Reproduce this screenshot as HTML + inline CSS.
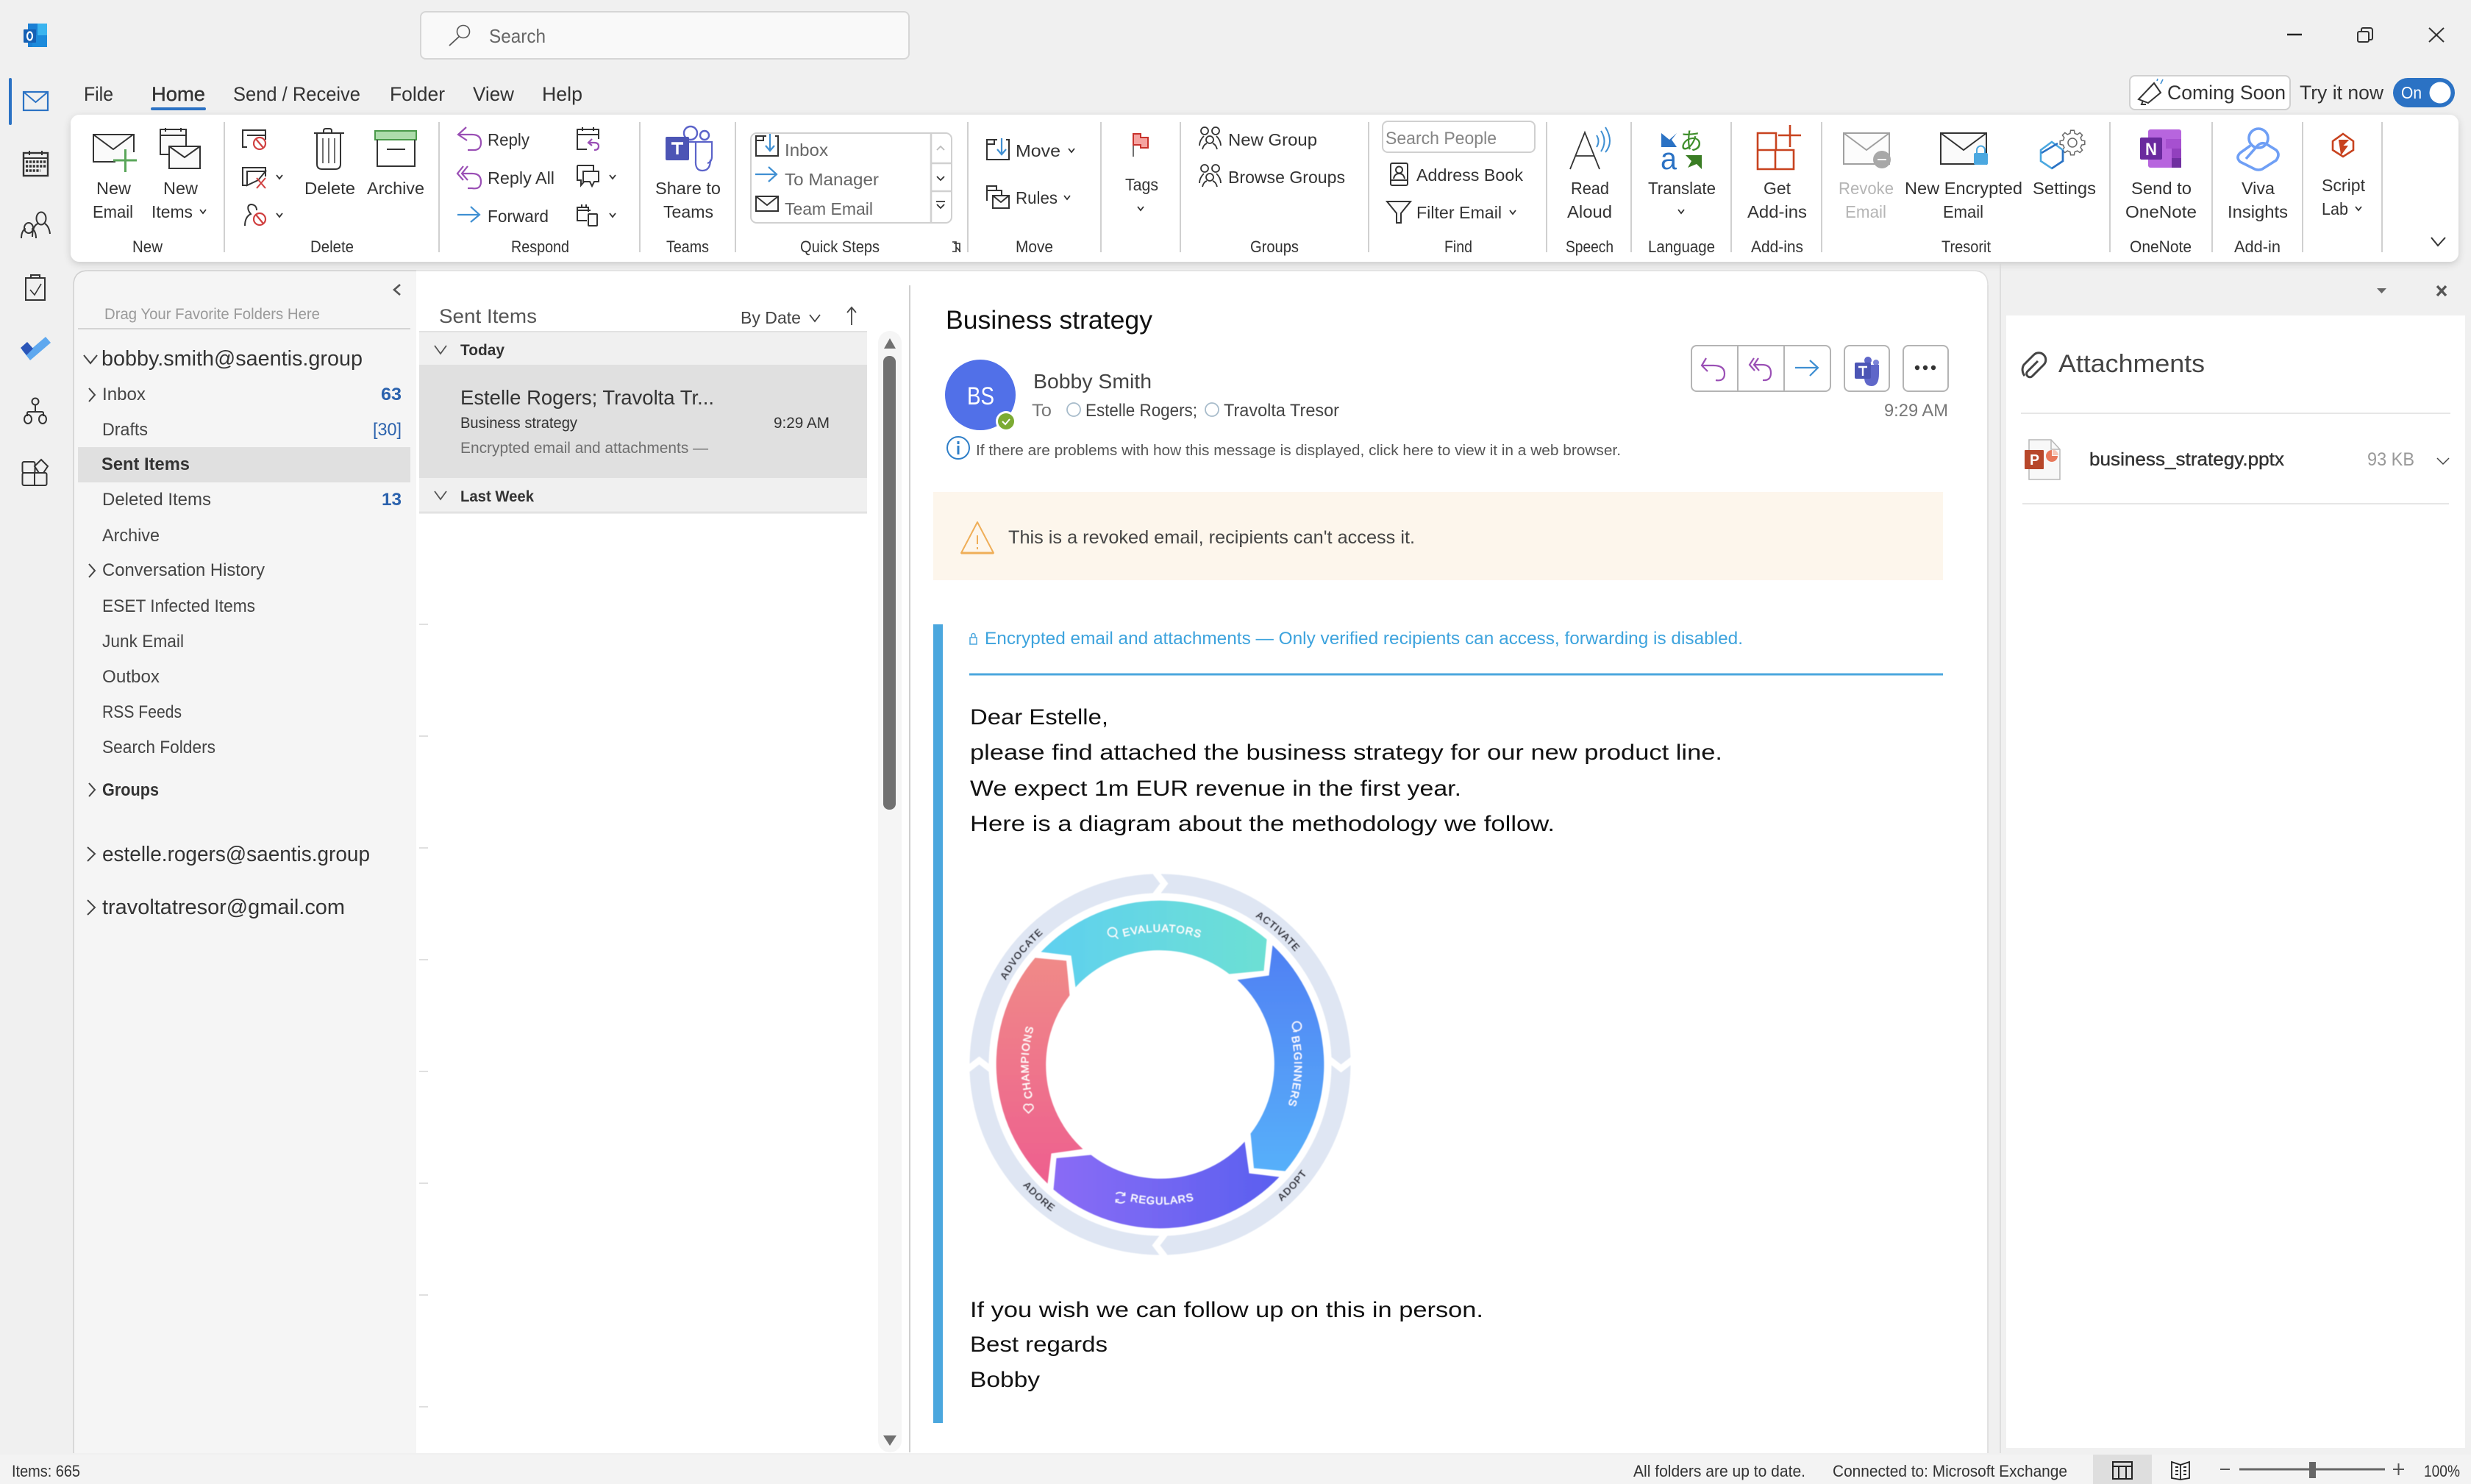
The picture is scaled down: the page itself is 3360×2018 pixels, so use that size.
<!DOCTYPE html>
<html lang="en"><head><meta charset="utf-8"><title>Outlook - Business strategy</title>
<style>
html,body{margin:0;padding:0;background:#f0f0f0}
svg{display:block;font-family:"Liberation Sans","Noto Sans CJK JP",sans-serif}
text{fill:#333}
.s20{font-size:20px}.s21{font-size:21px}.s22{font-size:22px}.s23{font-size:23px}.s24{font-size:24px}.s25{font-size:25px}.s26{font-size:26px}.s27{font-size:27px}.s28{font-size:28px}.s29{font-size:29px}.s30{font-size:30px}.s34{font-size:34px}.s35{font-size:35px}
.b{font-weight:bold}.g{fill:#777}.lg{fill:#999}.bl{fill:#2b62ad}.k{fill:#111}.sm{stroke:#333;stroke-width:.4px}
.i{fill:none;stroke:#333;stroke-width:2}.ip{fill:#fafafa;stroke:#333;stroke-width:2}
.pu{fill:none;stroke:#9a4fb5;stroke-width:2.2}.fw{fill:none;stroke:#3f8fd2;stroke-width:2.2}
.ch{fill:none;stroke:#333;stroke-width:1.8}
.sep{stroke:#d0d0d0;stroke-width:2}
.w{fill:#fff;font-size:14.5px;letter-spacing:1.1px;stroke:#fff;stroke-width:.35px}.o{fill:#1c1c2a;font-size:14px;letter-spacing:.7px;font-weight:bold}
</style></head><body>
<svg width="3360" height="2018" viewBox="0 0 3360 2018" xmlns="http://www.w3.org/2000/svg">
<defs>
<filter id="sh" x="-2%" y="-10%" width="104%" height="125%"><feDropShadow dx="0" dy="3" stdDeviation="5" flood-color="#000" flood-opacity=".16"/></filter>
<filter id="soft" x="-5%" y="-5%" width="110%" height="110%"><feGaussianBlur stdDeviation=".5"/></filter>
<linearGradient id="gT" gradientUnits="userSpaceOnUse" x1="-162" y1="0" x2="145" y2="0"><stop offset="0" stop-color="#5fd0ef"/><stop offset="1" stop-color="#6de0d4"/></linearGradient>
<linearGradient id="gB" gradientUnits="userSpaceOnUse" x1="-162" y1="0" x2="145" y2="0"><stop offset="0" stop-color="#5080f3"/><stop offset="1" stop-color="#57b0fa"/></linearGradient>
<linearGradient id="gP" gradientUnits="userSpaceOnUse" x1="-162" y1="0" x2="145" y2="0"><stop offset="0" stop-color="#5a60f0"/><stop offset="1" stop-color="#8a6cf5"/></linearGradient>
<linearGradient id="gR" gradientUnits="userSpaceOnUse" x1="-162" y1="0" x2="145" y2="0"><stop offset="0" stop-color="#ee5f8f"/><stop offset="1" stop-color="#f08a88"/></linearGradient>
<path id="aEv" d="M-130,-125A180 180 0 0 1 130,-125"/>
<path id="aRe" d="M-135,134A190 190 0 0 0 135,134"/>
<path id="aBe" d="M140,-117.500A183 183 0 0 1 127,131.500"/>
<path id="aCh" d="M-133,119.800A179 179 0 0 1 -129,-124.300"/>
<path id="aAc" d="M41.500,-235.400A239 239 0 0 1 228.600,-69.900"/>
<path id="aAv" d="M-237.200,-29.100A239 239 0 0 1 -81.700,-224.600"/>
<path id="aAd" d="M64.400,240.500A249 249 0 0 0 245.200,43.200"/>
<path id="aAo" d="M-240.500,64.400A249 249 0 0 0 -43.200,245.200"/>
</defs>
<rect width="3360" height="2018" fill="#f0f0f0"/>

<!-- title bar -->
<path fill="#1a7fd4" d="M38,32h26v32H38z"/><path fill="#3ab4ef" d="M51,32h13v16H51z"/><path fill="#1c8adb" d="M44,48h20v16H44z"/><rect x="32" y="40" width="17" height="18" rx="1" fill="#1560b4"/><ellipse cx="40.500" cy="49" rx="3.500" ry="5.500" fill="none" stroke="#fff" stroke-width="2.200"/>
<rect x="572" y="16" width="664" height="64" rx="7" fill="#f9f9f9" stroke="#d6d6d6" stroke-width="2"/>
<circle cx="630" cy="43" r="8.500" fill="none" stroke="#555" stroke-width="1.600"/><path d="M624,50L611,62" style="stroke:#555;stroke-width:1.800;fill:none"/>
<text x="665" y="58" textLength="77" lengthAdjust="spacingAndGlyphs" class="s26" style="fill:#666">Search</text>
<path d="M3110,47h20" stroke="#222" stroke-width="2.400" fill="none"/>
<rect x="3206" y="43" width="15" height="14" rx="2" class="i"/><path d="M3211,43v-3a2,2 0 0 1 2-2h10a3,3 0 0 1 3,3v11a2,2 0 0 1-2,2h-3" class="i"/>
<path d="M3303,38L3323,57M3323,38L3303,57" class="i"/>

<!-- nav rail -->
<rect x="12" y="106" width="4" height="64" rx="2" fill="#2b72c4"/>
<rect x="32" y="125" width="33" height="25" fill="none" stroke="#2b72c4" stroke-width="2.200"/><path d="M32,125L48.500,139L65,125" fill="none" stroke="#2b72c4" stroke-width="2"/>
<rect x="32" y="208" width="33" height="31" class="i" style="stroke-width:2.400"/><path d="M32,215h33M40,205v6M57,205v6" class="i"/><path d="M35,220h28M35,226h28M35,232h20" fill="none" stroke="#333" stroke-width="3.400" stroke-dasharray="3.200 1.600"/>
<ellipse cx="56" cy="297" rx="6.500" ry="8.500" class="i"/><path d="M44,322c0-12,4-17,8-18M68,318c-1-8-4-12-7-14" class="i"/><ellipse cx="39" cy="310" rx="6" ry="7" class="i"/><path d="M29,324c0-8,3-12,6-13M49,324c0-8-3-12-6-13" class="i"/>
<path d="M35,378h26v30H35z" class="i"/><path d="M42,378v-4h12v4" class="i"/><path d="M41,394l6,7l9-15" class="i" style="stroke-width:1.600"/>
<polygon points="30,476 41,490 69,466 62,458 41,476 37,472" fill="#5ea8ef"/><polygon points="28,473 37,465 45,474 36,483" fill="#2a55b8"/>
<circle cx="48" cy="546" r="4.500" class="i"/><path d="M48,551v9M37,566v-4q0-2 2-2h18q2,0 2,2v4" class="i"/><ellipse cx="38" cy="570" rx="5" ry="6" class="i"/><ellipse cx="58" cy="570" rx="5" ry="6" class="i"/>
<rect x="30.500" y="628" width="17" height="15" rx="2" class="i"/><path d="M56,625l9,9l-6,9h-6l-6-9z" class="i"/><rect x="30.500" y="643" width="33" height="17" rx="2" class="i"/><path d="M47,643v17" class="i"/>

<!-- tabs -->
<text x="114" y="137" textLength="40" lengthAdjust="spacingAndGlyphs" class="s27">File</text>
<text x="206" y="137" textLength="73" lengthAdjust="spacingAndGlyphs" class="s27 sm">Home</text>
<rect x="205" y="146" width="75" height="4" rx="2" fill="#2b72c4"/>
<text x="317" y="137" textLength="173" lengthAdjust="spacingAndGlyphs" class="s27">Send / Receive</text>
<text x="530" y="137" textLength="75" lengthAdjust="spacingAndGlyphs" class="s27">Folder</text>
<text x="643" y="137" textLength="56" lengthAdjust="spacingAndGlyphs" class="s27">View</text>
<text x="737" y="137" textLength="55" lengthAdjust="spacingAndGlyphs" class="s27">Help</text>
<rect x="2896" y="103" width="218" height="46" rx="7" fill="#fff" stroke="#d0d0d0" stroke-width="2"/>
<path d="M2929,113L2938,126L2921,140L2908,135z" class="i"/><path d="M2914,137l-2,5l6,0" class="i"/><path d="M2933,110l1-3M2938,114l3-6" fill="none" stroke="#3f8fd2" stroke-width="1.600"/>
<text x="2947" y="135" textLength="161" lengthAdjust="spacingAndGlyphs" class="s27">Coming Soon</text>
<text x="3127" y="135" textLength="114" lengthAdjust="spacingAndGlyphs" class="s27">Try it now</text>
<rect x="3254" y="106" width="84" height="40" rx="20" fill="#2b72c4"/><text x="3265" y="134" textLength="28" lengthAdjust="spacingAndGlyphs" class="s23" style="fill:#fff">On</text><circle cx="3318" cy="126" r="14.500" fill="#fff"/>

<!-- ribbon -->
<rect x="96" y="156" width="3247" height="200" rx="12" fill="#fff" filter="url(#sh)"/>
<path class="sep" d="M305,166v177M597,166v177M870,166v177M1000,166v177M1316,166v177M1497,166v177M1605,166v177M1861,166v177M2103,166v177M2218,166v177M2354,166v177M2477,166v177M2869,166v177M3008,166v177M3131,166v177M3239,166v177"/>

<!-- new -->
<path d="M182,207V183H127V220h30" class="ip"/><path d="M127,183L154,203L181,183" class="i"/><path d="M170.500,203v31M154,218h32" fill="none" stroke="#5aa65a" stroke-width="3"/>
<path d="M230,210H218V176h35v22" class="ip"/><path d="M218,184h35M225,174v5M246,174v5" class="i"/><rect x="230" y="199" width="42" height="30" class="ip"/><path d="M230,199L251,214L272,199" class="i"/>
<text x="131" y="264" textLength="47" lengthAdjust="spacingAndGlyphs" class="s23">New</text><text x="126" y="296" textLength="55" lengthAdjust="spacingAndGlyphs" class="s23">Email</text>
<text x="222" y="264" textLength="47" lengthAdjust="spacingAndGlyphs" class="s23">New</text><text x="206" y="296" textLength="56" lengthAdjust="spacingAndGlyphs" class="s23">Items</text><path class="ch" d="M272,285l4,5l4-5"/>
<text x="180" y="343" textLength="41" lengthAdjust="spacingAndGlyphs" class="s22">New</text>

<!-- delete -->
<path d="M336,200H330V177h31v13" class="i"/><path d="M336,184h25" class="i"/><circle cx="353" cy="195" r="8" fill="#fff" stroke="#d04040" stroke-width="2.200"/><path d="M348,189l10,12" stroke="#d04040" stroke-width="2.200"/>
<path d="M336,252h-6v-24h31v12" class="i"/><path d="M336,252V233h25l-10,12z" class="i"/><path d="M349,242l12,14M361,242l-12,14" stroke="#d04040" stroke-width="2" fill="none"/>
<path d="M333,307c0-10,4-14,8-16c-5-6-5-12,0-13c5,0,8,3,8,8" class="i"/><circle cx="353" cy="298" r="8" fill="#fff" stroke="#d04040" stroke-width="2.200"/><path d="M348,292l10,12" stroke="#d04040" stroke-width="2.200"/>
<path class="ch" d="M376,238l4,5l4-5M376,290l4,5l4-5"/>
<path d="M427,181h41M440,181v-3q0-3 3-3h5q3,0 3,3v3" class="i"/><path d="M431,181v42q0,7 7,7h18q7,0 7-7V181" class="i"/><path d="M439,188v34M447,188v34M455,188v34" class="i" style="stroke-width:1.400"/>
<rect x="510" y="178" width="56" height="12" fill="#addcab" stroke="#4a9a4a" stroke-width="2"/><path d="M513,190v36h51V190" class="i"/><path d="M526,203h25" class="i"/>
<text x="414" y="264" textLength="69" lengthAdjust="spacingAndGlyphs" class="s23">Delete</text><text x="499" y="264" textLength="78" lengthAdjust="spacingAndGlyphs" class="s23">Archive</text>
<text x="422" y="343" textLength="59" lengthAdjust="spacingAndGlyphs" class="s22">Delete</text>

<!-- respond -->
<path class="pu" d="M634,173L623,183L635,191M623,183H642Q654,183 654,194T642,204H636"/>
<path class="pu" d="M630,226L622,236L630,245M636,226L628,236L636,245M628,236H642Q654,236 654,247T642,256H636"/>
<path class="fw" d="M622,292H652M640,281L652,292L640,302"/>
<text x="663" y="198" textLength="57" lengthAdjust="spacingAndGlyphs" class="s23">Reply</text><text x="663" y="250" textLength="91" lengthAdjust="spacingAndGlyphs" class="s23">Reply All</text><text x="663" y="302" textLength="83" lengthAdjust="spacingAndGlyphs" class="s23">Forward</text>
<path d="M798,203H785V176h29v13M785,183h29M792,173v5M807,173v5" class="i"/><path class="pu" d="M805,189l-5,5l5,4M800,194h8q6,0 6,5t-6,5"/>
<path d="M785,225h22v10M785,225v20l5,0 v7l6-7" class="i"/><path d="M793,233h21v14h-6l-3,6l-3-6h-9z" class="ip"/>
<path d="M800,288V282h-15v18h13M785,286h18M791,278v4M797,278v4" class="i"/><rect x="800" y="291" width="12" height="16" class="ip" rx="1"/>
<path class="ch" d="M829,238l4,5l4-5M829,290l4,5l4-5"/>
<text x="695" y="343" textLength="79" lengthAdjust="spacingAndGlyphs" class="s22">Respond</text>

<!-- teams -->
<circle cx="939" cy="181" r="9" fill="none" stroke="#5b63c9" stroke-width="2.400"/><circle cx="958" cy="184" r="6" fill="none" stroke="#5b63c9" stroke-width="2.400"/>
<path d="M937,193h31v20q0,7-6,9M946,193v25q-1,14 9,14q11,0 11-15" fill="none" stroke="#5b63c9" stroke-width="2.200"/>
<rect x="905" y="186" width="32" height="32" rx="2" fill="#4c55b5"/><path d="M913,195h16M921,195v15" stroke="#fff" stroke-width="3.400"/>
<text x="891" y="264" textLength="89" lengthAdjust="spacingAndGlyphs" class="s23">Share to</text><text x="902" y="296" textLength="68" lengthAdjust="spacingAndGlyphs" class="s23">Teams</text>
<text x="906" y="343" textLength="58" lengthAdjust="spacingAndGlyphs" class="s22">Teams</text>

<!-- quick steps -->
<rect x="1021" y="181" width="273" height="122" rx="8" fill="#fff" stroke="#d0d0d0" stroke-width="2"/>
<path class="sep" d="M1266,181v122M1266,222h28M1266,260h28" style="stroke-width:2.600"/>
<path class="ch" d="M1274,204l5-5l5,5" style="stroke:#bbb"/><path class="ch" d="M1274,240l5,5l5-5"/><path class="ch" d="M1274,278l5,5l5-5M1273,274h12"/>
<path d="M1042,185h-14v27h30v-27h-4M1028,191h10v-6" class="i"/><path d="M1047,182v22M1041,198l6,7l6-7" class="fw"/>
<path class="fw" d="M1027,237h29M1045,227l11,10l-11,10"/>
<rect x="1028" y="267" width="30" height="20" class="ip"/><path d="M1028,267l15,12l15-12" class="i"/>
<text x="1067" y="212" textLength="59" lengthAdjust="spacingAndGlyphs" class="s23" style="fill:#666">Inbox</text><text x="1067" y="252" textLength="128" lengthAdjust="spacingAndGlyphs" class="s23" style="fill:#666">To Manager</text><text x="1067" y="292" textLength="120" lengthAdjust="spacingAndGlyphs" class="s23" style="fill:#666">Team Email</text>
<text x="1088" y="343" textLength="108" lengthAdjust="spacingAndGlyphs" class="s22">Quick Steps</text>
<path d="M1295,329h5v13h-5M1297,331h8v12M1300,336l6,6" fill="none" stroke="#333" stroke-width="1.600"/>

<!-- move -->
<path d="M1356,190h-14v27h30v-27h-4M1342,196h10v-6" class="i"/><path d="M1362,188v21M1356,203l6,7l6-7" class="fw"/>
<path d="M1355,259v-6h-13v20M1342,259h20v10" class="i"/><rect x="1350" y="266" width="22" height="17" class="ip"/><path d="M1350,266l11,9l11-9" class="i"/>
<text x="1381" y="213" textLength="61" lengthAdjust="spacingAndGlyphs" class="s23">Move</text><text x="1381" y="277" textLength="57" lengthAdjust="spacingAndGlyphs" class="s23">Rules</text>
<path class="ch" d="M1453,202l4,5l4-5M1447,266l4,5l4-5"/>
<text x="1381" y="343" textLength="51" lengthAdjust="spacingAndGlyphs" class="s22">Move</text>

<!-- tags -->
<path d="M1541,182v31" stroke="#333" stroke-width="1.400" fill="none"/><path d="M1541,182h10v5h10v14h-10v-4h-10z" fill="#f5a3a0" stroke="#c8322c" stroke-width="2"/>
<text x="1530" y="259" textLength="45" lengthAdjust="spacingAndGlyphs" class="s23">Tags</text><path class="ch" d="M1547,281l4,5l4-5"/>

<!-- groups -->
<g class="i" style="stroke-width:1.800"><circle cx="1638" cy="178" r="5"/><circle cx="1653" cy="178" r="5"/><circle cx="1645" cy="190" r="5"/><path d="M1631,198c0-6,3-10,6-13M1660,198c0-6-3-10-6-13M1635,203c1-4,3-7,6-8M1655,203c-1-4-3-7-6-8"/></g>
<g class="i" style="stroke-width:1.800"><circle cx="1638" cy="229" r="5"/><circle cx="1653" cy="229" r="5"/><circle cx="1645" cy="241" r="5"/><path d="M1631,249c0-6,3-10,6-13M1660,249c0-6-3-10-6-13M1635,254c1-4,3-7,6-8M1655,254c-1-4-3-7-6-8"/></g>
<text x="1670" y="198" textLength="121" lengthAdjust="spacingAndGlyphs" class="s23">New Group</text><text x="1670" y="249" textLength="159" lengthAdjust="spacingAndGlyphs" class="s23">Browse Groups</text>
<text x="1700" y="343" textLength="66" lengthAdjust="spacingAndGlyphs" class="s22">Groups</text>

<!-- find -->
<rect x="1880" y="165" width="207" height="42" rx="7" fill="#fff" stroke="#d0d0d0" stroke-width="2"/>
<text x="1884" y="196" textLength="151" lengthAdjust="spacingAndGlyphs" class="s24" style="fill:#858585">Search People</text>
<rect x="1891" y="222" width="23" height="30" rx="2" class="i"/><path d="M1891,245h23" class="i"/><circle cx="1902.500" cy="231" r="4.500" class="i"/><path d="M1895,243c1-5,4-7,7.500-7s6.500,2,7.500,7" class="i"/>
<path d="M1886,274h32l-13,16v13h-6v-13z" fill="#fafafa" stroke="#333" stroke-width="2"/>
<text x="1926" y="246" textLength="145" lengthAdjust="spacingAndGlyphs" class="s23">Address Book</text><text x="1926" y="297" textLength="116" lengthAdjust="spacingAndGlyphs" class="s23">Filter Email</text>
<path class="ch" d="M2053,286l4,5l4-5"/>
<text x="1964" y="343" textLength="38" lengthAdjust="spacingAndGlyphs" class="s22">Find</text>

<!-- speech -->
<path d="M2135,230L2155,180L2175,230M2142,212H2168" class="i" style="stroke-width:1.800"/>
<path d="M2171,184q5,8 0,16M2177,178q9,14 0,28M2183,173q12,20 0,34" fill="none" stroke="#3f8fd2" stroke-width="2"/>
<text x="2136" y="264" textLength="52" lengthAdjust="spacingAndGlyphs" class="s23">Read</text><text x="2131" y="296" textLength="61" lengthAdjust="spacingAndGlyphs" class="s23">Aloud</text>
<text x="2129" y="343" textLength="65" lengthAdjust="spacingAndGlyphs" class="s22">Speech</text>

<!-- language -->
<path d="M2259,181l11,9l10-9l-7,9l7,10h-21z" fill="#2b72c4"/>
<text x="2284" y="203" textLength="31" lengthAdjust="spacingAndGlyphs" style="font-size:32px;fill:#3f8f2c">あ</text>
<text x="2258" y="230" textLength="22" lengthAdjust="spacingAndGlyphs" style="font-size:42px;fill:#2b72c4">a</text>
<path d="M2292,211h22v19l-7-7l-12,5l5-9z" fill="#3a7d24"/>
<text x="2241" y="264" textLength="92" lengthAdjust="spacingAndGlyphs" class="s23">Translate</text><path class="ch" d="M2282,285l4,5l4-5"/>
<text x="2241" y="343" textLength="91" lengthAdjust="spacingAndGlyphs" class="s22">Language</text>

<!-- add-ins -->
<path d="M2390,181h25v23h-25zM2390,204h49v26h-49zM2414,204v26M2434,170v30M2418,184h31" fill="none" stroke="#c8431f" stroke-width="2.600"/>
<text x="2398" y="264" textLength="37" lengthAdjust="spacingAndGlyphs" class="s23">Get</text><text x="2376" y="296" textLength="81" lengthAdjust="spacingAndGlyphs" class="s23">Add-ins</text>
<text x="2381" y="343" textLength="71" lengthAdjust="spacingAndGlyphs" class="s22">Add-ins</text>

<!-- tresorit -->
<rect x="2507" y="181" width="62" height="42" fill="#fcfcfc" stroke="#a0a0a0" stroke-width="2"/><path d="M2507,181l31,23l31-23" fill="none" stroke="#a0a0a0" stroke-width="2"/><circle cx="2559" cy="217" r="12" fill="#a8a8a8"/><path d="M2553,217h12" stroke="#fff" stroke-width="2"/>
<rect x="2639" y="181" width="62" height="42" class="ip"/><path d="M2639,181l31,23l31-23" class="i"/><rect x="2684" y="208" width="19" height="16" rx="2" fill="#4ba8e0"/><path d="M2688,208v-4a5.500,5.500 0 0 1 11,0v4" fill="none" stroke="#4ba8e0" stroke-width="2"/>
<g transform="translate(2818,194)"><polygon points="-3.150,-12.600 -2.370,-16.800 2.370,-16.800 3.150,-12.600 6.680,-11.140 10.200,-13.560 13.560,-10.200 11.140,-6.680 12.600,-3.150 16.800,-2.370 16.800,2.370 12.600,3.150 11.140,6.680 13.560,10.200 10.200,13.560 6.680,11.140 3.150,12.600 2.370,16.800 -2.370,16.800 -3.150,12.600 -6.680,11.140 -10.200,13.560 -13.560,10.200 -11.140,6.680 -12.600,3.150 -16.800,2.370 -16.800,-2.370 -12.600,-3.150 -11.140,-6.680 -13.560,-10.200 -10.200,-13.560 -6.680,-11.140" fill="#fff" stroke="#666" stroke-width="1.500"/><circle r="6" fill="none" stroke="#666" stroke-width="1.500"/></g>
<path d="M2790,193l15,11v15l-15,10l-15-10v-15z" fill="#fff" stroke="#4ba8e0" stroke-width="2.600"/><path d="M2776,208l22-13M2805,204v15l-15,10" fill="none" stroke="#2b72c4" stroke-width="2.600"/>
<text x="2500" y="264" textLength="75" lengthAdjust="spacingAndGlyphs" class="s23" style="fill:#b5b5b5">Revoke</text><text x="2509" y="296" textLength="56" lengthAdjust="spacingAndGlyphs" class="s23" style="fill:#b5b5b5">Email</text>
<text x="2590" y="264" textLength="160" lengthAdjust="spacingAndGlyphs" class="s23">New Encrypted</text><text x="2642" y="296" textLength="55" lengthAdjust="spacingAndGlyphs" class="s23">Email</text>
<text x="2764" y="264" textLength="86" lengthAdjust="spacingAndGlyphs" class="s23">Settings</text>
<text x="2640" y="343" textLength="67" lengthAdjust="spacingAndGlyphs" class="s22">Tresorit</text>

<!-- onenote -->
<rect x="2921" y="176" width="45" height="52" rx="3" fill="#b765de"/><rect x="2945" y="189" width="21" height="13" fill="#a650d0"/><rect x="2953" y="202" width="13" height="13" fill="#9240be"/><rect x="2953" y="215" width="13" height="13" fill="#7030a0"/>
<rect x="2910" y="187" width="30" height="30" rx="2" fill="#6a2a9e"/><text x="2917" y="211" textLength="16" lengthAdjust="spacingAndGlyphs" class="s24 b" style="fill:#fff">N</text>
<text x="2898" y="264" textLength="82" lengthAdjust="spacingAndGlyphs" class="s23">Send to</text><text x="2890" y="296" textLength="97" lengthAdjust="spacingAndGlyphs" class="s23">OneNote</text>
<text x="2896" y="343" textLength="84" lengthAdjust="spacingAndGlyphs" class="s22">OneNote</text>

<!-- viva -->
<g fill="none" stroke="#6f9ff5" stroke-width="3.600"><circle cx="3071" cy="188" r="13"/><path d="M3060,198L3046,208Q3040,214 3046,220L3066,230Q3071,232 3076,230L3095,218Q3101,210 3095,204L3082,196Q3074,192 3068,200L3054,216"/></g>
<text x="3048" y="264" textLength="45" lengthAdjust="spacingAndGlyphs" class="s23">Viva</text><text x="3029" y="296" textLength="82" lengthAdjust="spacingAndGlyphs" class="s23">Insights</text>
<text x="3038" y="343" textLength="63" lengthAdjust="spacingAndGlyphs" class="s22">Add-in</text>

<!-- script lab -->
<path d="M3186,182l14,10v12l-14,9l-14-9v-12z" fill="#fff" stroke="#c8431f" stroke-width="2.600"/><path d="M3180,191h12l-8,8h7l-8,11" fill="#c8431f" stroke="#c8431f" stroke-width="2"/>
<text x="3157" y="260" textLength="59" lengthAdjust="spacingAndGlyphs" class="s23">Script</text><text x="3157" y="292" textLength="36" lengthAdjust="spacingAndGlyphs" class="s23">Lab</text><path class="ch" d="M3203,281l4,5l4-5"/>
<path d="M3306,323l9,11l10-11" class="i"/>

<!-- panes -->
<path d="M100,1976V388q0-20 20-20H566V1976z" fill="#f5f5f5"/><path d="M100,1976V388q0-20 20-20H566" fill="none" stroke="#cfcfcf" stroke-width="1.500"/>
<path d="M566,368H2683q20,0 20,20V1976H566z" fill="#fff"/><path d="M566,368H2683q20,0 20,20" fill="none" stroke="#dedede" stroke-width="1.500"/>
<path d="M2703,388V1976M2720,358V1976" stroke="#d8d8d8" stroke-width="1.500" fill="none"/>
<rect x="2728" y="429" width="624" height="1540" fill="#fff"/>
<path d="M1237,388V1975" stroke="#cfcfcf" stroke-width="2"/>

<!-- folder pane -->
<path d="M544,387l-8,7l8,7" fill="none" stroke="#555" stroke-width="2.600"/>
<text x="142" y="434" textLength="293" lengthAdjust="spacingAndGlyphs" class="s21" style="fill:#9a9a9a">Drag Your Favorite Folders Here</text>
<path d="M106,447H558" stroke="#d4d4d4" stroke-width="2"/>
<path class="ch" d="M114,483l9,11l9-11" style="stroke:#444;stroke-width:2"/>
<text x="138" y="497" textLength="355" lengthAdjust="spacingAndGlyphs" class="s29">bobby.smith@saentis.group</text>
<path class="ch" d="M121,528l8,9l-8,9" style="stroke:#444;stroke-width:2"/>
<text x="139" y="544" textLength="59" lengthAdjust="spacingAndGlyphs" class="s24" style="fill:#444">Inbox</text><text x="518" y="544" textLength="28" lengthAdjust="spacingAndGlyphs" class="s24 b bl">63</text>
<text x="139" y="592" textLength="62" lengthAdjust="spacingAndGlyphs" class="s24" style="fill:#444">Drafts</text><text x="507" y="592" textLength="39" lengthAdjust="spacingAndGlyphs" class="s24 bl">[30]</text>
<rect x="106" y="608" width="452" height="48" fill="#e0e0e0"/>
<text x="138" y="639" textLength="120" lengthAdjust="spacingAndGlyphs" class="s24 b">Sent Items</text>
<text x="139" y="687" textLength="148" lengthAdjust="spacingAndGlyphs" class="s24" style="fill:#444">Deleted Items</text><text x="519" y="687" textLength="27" lengthAdjust="spacingAndGlyphs" class="s24 b bl">13</text>
<text x="139" y="736" textLength="78" lengthAdjust="spacingAndGlyphs" class="s24" style="fill:#444">Archive</text>
<path class="ch" d="M121,767l8,9l-8,9" style="stroke:#444;stroke-width:2"/>
<text x="139" y="783" textLength="221" lengthAdjust="spacingAndGlyphs" class="s24" style="fill:#444">Conversation History</text>
<text x="139" y="832" textLength="208" lengthAdjust="spacingAndGlyphs" class="s24" style="fill:#444">ESET Infected Items</text>
<text x="139" y="880" textLength="111" lengthAdjust="spacingAndGlyphs" class="s24" style="fill:#444">Junk Email</text>
<text x="139" y="928" textLength="78" lengthAdjust="spacingAndGlyphs" class="s24" style="fill:#444">Outbox</text>
<text x="139" y="976" textLength="108" lengthAdjust="spacingAndGlyphs" class="s24" style="fill:#444">RSS Feeds</text>
<text x="139" y="1024" textLength="154" lengthAdjust="spacingAndGlyphs" class="s24" style="fill:#444">Search Folders</text>
<path class="ch" d="M121,1065l8,9l-8,9" style="stroke:#444;stroke-width:2"/>
<text x="139" y="1082" textLength="77" lengthAdjust="spacingAndGlyphs" class="s24 b">Groups</text>
<path class="ch" d="M119,1152l10,9l-10,10" style="stroke:#444;stroke-width:2"/>
<text x="139" y="1171" textLength="364" lengthAdjust="spacingAndGlyphs" class="s29">estelle.rogers@saentis.group</text>
<path class="ch" d="M119,1224l10,10l-10,10" style="stroke:#444;stroke-width:2"/>
<text x="139" y="1243" textLength="330" lengthAdjust="spacingAndGlyphs" class="s29">travoltatresor@gmail.com</text>

<!-- list -->
<text x="597" y="439" textLength="133" lengthAdjust="spacingAndGlyphs" class="s27" style="fill:#555">Sent Items</text>
<text x="1007" y="440" textLength="82" lengthAdjust="spacingAndGlyphs" class="s23" style="fill:#444">By Date</text>
<path class="ch" d="M1101,428l7,9l7-9" style="stroke:#444"/>
<path d="M1158,442V419M1152,425l6-7l6,7" fill="none" stroke="#444" stroke-width="1.800"/>
<rect x="570" y="450" width="609" height="46" fill="#f0f0f0"/><path d="M570,451H1179" stroke="#e2e2e2" stroke-width="2"/>
<path class="ch" d="M591,470l8,11l8-11" style="stroke:#555"/>
<text x="626" y="483" textLength="60" lengthAdjust="spacingAndGlyphs" class="s21 b">Today</text>
<rect x="570" y="496" width="609" height="154" fill="#e0e0e0"/>
<text x="626" y="550" textLength="345" lengthAdjust="spacingAndGlyphs" class="s28">Estelle Rogers; Travolta Tr...</text>
<text x="626" y="582" textLength="159" lengthAdjust="spacingAndGlyphs" class="s21">Business strategy</text>
<text x="1052" y="582" textLength="76" lengthAdjust="spacingAndGlyphs" class="s21">9:29 AM</text>
<text x="626" y="616" textLength="337" lengthAdjust="spacingAndGlyphs" class="s21" style="fill:#6f6f6f">Encrypted email and attachments —</text>
<rect x="570" y="650" width="609" height="48" fill="#f0f0f0"/><path d="M570,697H1179" stroke="#e2e2e2" stroke-width="3"/>
<path class="ch" d="M591,668l8,11l8-11" style="stroke:#555"/>
<text x="626" y="682" textLength="100" lengthAdjust="spacingAndGlyphs" class="s21 b">Last Week</text>
<path d="M570,849h12M570,1001h12M570,1153h12M570,1305h12M570,1457h12M570,1609h12M570,1761h12M570,1913h12" stroke="#e0e0e0" stroke-width="2"/>
<rect x="1194" y="450" width="32" height="1525" rx="16" fill="#f5f5f5"/>
<path d="M1210,460l8,14h-16z" fill="#707070"/><rect x="1201" y="484" width="17" height="617" rx="8" fill="#707070"/><path d="M1210,1966l-9-14h18z" fill="#707070"/>

<!-- reading header -->
<text x="1286" y="447" textLength="281" lengthAdjust="spacingAndGlyphs" class="s35 k">Business strategy</text>
<circle cx="1333" cy="537" r="48" fill="#5170e8"/>
<text x="1315" y="550" textLength="37" lengthAdjust="spacingAndGlyphs" style="fill:#fff;font-size:34px">BS</text>
<circle cx="1368" cy="573" r="14" fill="#fff"/><circle cx="1368" cy="573" r="11" fill="#7cab33"/><path d="M1363,573l4,4l6-7" fill="none" stroke="#fff" stroke-width="2"/>
<text x="1405" y="528" textLength="161" lengthAdjust="spacingAndGlyphs" class="s28" style="fill:#444">Bobby Smith</text>
<text x="1403" y="566" textLength="27" lengthAdjust="spacingAndGlyphs" class="s24 g">To</text>
<circle cx="1460" cy="557" r="9" fill="none" stroke="#a8bccb" stroke-width="1.800"/>
<text x="1476" y="566" textLength="152" lengthAdjust="spacingAndGlyphs" class="s24" style="fill:#444">Estelle Rogers;</text>
<circle cx="1648" cy="557" r="9" fill="none" stroke="#a8bccb" stroke-width="1.800"/>
<text x="1664" y="566" textLength="157" lengthAdjust="spacingAndGlyphs" class="s24" style="fill:#444">Travolta Tresor</text>
<rect x="2300" y="470" width="189" height="62" rx="7" fill="#fff" stroke="#b4b4b4" stroke-width="2"/><path d="M2363,470v62M2426,470v62" stroke="#b4b4b4" stroke-width="2"/>
<path class="pu" d="M2320,487L2314,497L2322,505M2314,497H2330Q2345,497 2345,508T2333,517"/>
<path class="pu" d="M2385,487l-6,9l7,8M2391,487l-6,9l7,8M2385,496H2396Q2408,496 2408,507T2397,517"/>
<path class="fw" d="M2441,500H2472M2461,490L2472,500L2461,511"/>
<rect x="2508" y="470" width="61" height="62" rx="7" fill="#fff" stroke="#b4b4b4" stroke-width="2"/>
<circle cx="2540" cy="490" r="5" fill="#5f67c9"/><circle cx="2551" cy="493" r="4" fill="#7b83d8"/><path d="M2535,496h20v12q0,17-10,17t-10-12z" fill="#5f67c9"/><rect x="2522" y="493" width="22" height="22" rx="2" fill="#4c55b5"/><path d="M2527,499h12M2533,499v12" stroke="#fff" stroke-width="2.400"/>
<rect x="2588" y="470" width="61" height="62" rx="7" fill="#fff" stroke="#b4b4b4" stroke-width="2"/><circle cx="2607" cy="500" r="3.200" fill="#333"/><circle cx="2618" cy="500" r="3.200" fill="#333"/><circle cx="2629" cy="500" r="3.200" fill="#333"/>
<text x="2562" y="566" textLength="87" lengthAdjust="spacingAndGlyphs" class="s24 g">9:29 AM</text>
<circle cx="1303" cy="609" r="15" fill="none" stroke="#2f7fc8" stroke-width="2"/><path d="M1303,606v12M1303,600v4" stroke="#2f7fc8" stroke-width="3" fill="none"/>
<text x="1327" y="619" textLength="877" lengthAdjust="spacingAndGlyphs" class="s20" style="fill:#555">If there are problems with how this message is displayed, click here to view it in a web browser.</text>
<rect x="1269" y="669" width="1373" height="120" fill="#fdf6ec"/>
<path d="M1329,710L1307,752H1351Z" fill="none" stroke="#efae58" stroke-width="2" stroke-linejoin="round"/><path d="M1307,752h44" stroke="#efae58" stroke-width="3"/><path d="M1329,728v12M1329,744v3" stroke="#efae58" stroke-width="2"/>
<text x="1371" y="739" textLength="553" lengthAdjust="spacingAndGlyphs" class="s25" style="fill:#444">This is a revoked email, recipients can't access it.</text>

<!-- message body -->
<rect x="1269" y="849" width="13" height="1086" fill="#4ba7de"/>
<path d="M1319,867h9v9h-9zM1321,867v-3a2.500,2.500 0 0 1 5,0v3" fill="none" stroke="#4ba7de" stroke-width="1.500"/>
<text x="1339" y="876" textLength="1031" lengthAdjust="spacingAndGlyphs" class="s24" style="fill:#3da3dd">Encrypted email and attachments — Only verified recipients can access, forwarding is disabled.</text>
<path d="M1318,917H2642" stroke="#4ba7de" stroke-width="3"/>
<text x="1319" y="985" textLength="188" lengthAdjust="spacingAndGlyphs" class="s30 k">Dear Estelle,</text>
<text x="1319" y="1033" textLength="1023" lengthAdjust="spacingAndGlyphs" class="s30 k">please find attached the business strategy for our new product line.</text>
<text x="1319" y="1082" textLength="668" lengthAdjust="spacingAndGlyphs" class="s30 k">We expect 1m EUR revenue in the first year.</text>
<text x="1319" y="1130" textLength="795" lengthAdjust="spacingAndGlyphs" class="s30 k">Here is a diagram about the methodology we follow.</text>
<text x="1319" y="1791" textLength="698" lengthAdjust="spacingAndGlyphs" class="s30 k">If you wish we can follow up on this in person.</text>
<text x="1319" y="1838" textLength="187" lengthAdjust="spacingAndGlyphs" class="s30 k">Best regards</text>
<text x="1319" y="1886" textLength="95" lengthAdjust="spacingAndGlyphs" class="s30 k">Bobby</text>

<!-- diagram -->
<g transform="translate(1577.500,1447.500)" filter="url(#soft)">
<g fill="#dfe6f3">
<path d="M1,-259L11,-246L1,-233A233 233 0 0 1 233,-10L246,0L259,-10A259 259 0 0 0 1,-259Z"/>
<path transform="rotate(90)" d="M1,-259L11,-246L1,-233A233 233 0 0 1 233,-10L246,0L259,-10A259 259 0 0 0 1,-259Z"/>
<path transform="rotate(180)" d="M1,-259L11,-246L1,-233A233 233 0 0 1 233,-10L246,0L259,-10A259 259 0 0 0 1,-259Z"/>
<path transform="rotate(270)" d="M1,-259L11,-246L1,-233A233 233 0 0 1 233,-10L246,0L259,-10A259 259 0 0 0 1,-259Z"/>
</g>
<path fill="url(#gT)" d="M-162,-153L-121,-148L-115,-105A155 155 0 0 1 94,-123L141,-127.500L145,-170A224 224 0 0 0 -162,-153Z"/>
<path fill="url(#gB)" transform="rotate(90)" d="M-162,-153L-121,-148L-115,-105A155 155 0 0 1 94,-123L141,-127.500L145,-170A224 224 0 0 0 -162,-153Z"/>
<path fill="url(#gP)" transform="rotate(180)" d="M-162,-153L-121,-148L-115,-105A155 155 0 0 1 94,-123L141,-127.500L145,-170A224 224 0 0 0 -162,-153Z"/>
<path fill="url(#gR)" transform="rotate(270)" d="M-162,-153L-121,-148L-115,-105A155 155 0 0 1 94,-123L141,-127.500L145,-170A224 224 0 0 0 -162,-153Z"/>
<text class="w" text-anchor="middle"><textPath href="#aEv" startOffset="51%">EVALUATORS</textPath></text>
<text class="w" text-anchor="middle"><textPath href="#aRe" startOffset="51%">REGULARS</textPath></text>
<text class="w" text-anchor="middle"><textPath href="#aBe" startOffset="50%">BEGINNERS</textPath></text>
<text class="w" text-anchor="middle"><textPath href="#aCh" startOffset="50%">CHAMPIONS</textPath></text>
<text class="o" text-anchor="middle"><textPath href="#aAc" startOffset="50%">ACTIVATE</textPath></text>
<text class="o" text-anchor="middle"><textPath href="#aAv" startOffset="50%">ADVOCATE</textPath></text>
<text class="o" text-anchor="middle"><textPath href="#aAd" startOffset="50%">ADOPT</textPath></text>
<text class="o" text-anchor="middle"><textPath href="#aAo" startOffset="50%">ADORE</textPath></text>
<g fill="none" stroke="#fff" stroke-width="1.500">
<circle cx="-65" cy="-180" r="6"/><path d="M-61,-175l4,4"/>
<circle cx="186" cy="-52" r="6"/><path d="M181,-45h5"/>
<path d="M-60,176a8,8 0 0 1 12,2M-48,186a8,8 0 0 1 -12,-1M-48,174v4h-4M-60,188v-4h4"/>
<path d="M-179,66l-6-6a4,4 0 0 1 6-5a4,4 0 0 1 6,5z"/>
</g>
</g>

<!-- attachments -->
<path d="M3232,392h13l-6.500,7z" fill="#666"/>
<path d="M3314,389L3326,402M3326,389L3314,402" stroke="#555" stroke-width="3.400" fill="none"/>
<path d="M2771,491L2757,505a4.500,4.500 0 0 0 6.500,6.500L2779,496a9.500,9.500 0 0 0-13.500-13.500L2752,496a13,13 0 0 0 1,15" fill="none" stroke="#444" stroke-width="3"/>
<text x="2799" y="506" textLength="199" lengthAdjust="spacingAndGlyphs" class="s34" style="fill:#444">Attachments</text>
<path d="M2748,562H3332M2750,685H3330" stroke="#e6e6e6" stroke-width="2"/>
<path d="M2759,598h30l12,13v41h-42z" fill="#f8f8f8" stroke="#b8b8b8" stroke-width="1.500"/><path d="M2789,598v13h12" fill="none" stroke="#b8b8b8" stroke-width="1.500"/>
<rect x="2753" y="612" width="26" height="26" rx="1" fill="#b7472a"/><text x="2760" y="632" textLength="13" lengthAdjust="spacingAndGlyphs" class="s20 b" style="fill:#fff">P</text>
<path d="M2790,620h8a8,8 0 1 1-8-8z" fill="#e8785a"/><path d="M2791,611a9,9 0 0 1 8,8h-8z" fill="#f7c5b5"/>
<text x="2841" y="633" textLength="265" lengthAdjust="spacingAndGlyphs" class="s25 sm">business_strategy.pptx</text>
<text x="3219" y="633" textLength="64" lengthAdjust="spacingAndGlyphs" class="s25" style="fill:#999">93 KB</text>
<path d="M3314,623l8,8l8-8" fill="none" stroke="#444" stroke-width="1.500"/>

<!-- status bar -->
<rect x="0" y="1978" width="3360" height="40" fill="#f3f3f3"/>
<text x="16" y="2008" textLength="93" lengthAdjust="spacingAndGlyphs" class="s22">Items: 665</text>
<text x="2221" y="2008" textLength="234" lengthAdjust="spacingAndGlyphs" class="s22">All folders are up to date.</text>
<text x="2492" y="2008" textLength="319" lengthAdjust="spacingAndGlyphs" class="s22">Connected to: Microsoft Exchange</text>
<rect x="2846" y="1978" width="80" height="40" fill="#dedede"/>
<path d="M2873,1988h26v23h-26zM2873,1994h26M2881,1994v17M2891,1994v17" fill="none" stroke="#222" stroke-width="2"/>
<path d="M2953,1988l12,4l12-4v22l-12,2l-12-2zM2965,1992v20" fill="#fafafa" stroke="#222" stroke-width="1.800"/><path d="M2958,1995h4M2958,2000h4M2958,2005h4M2969,1995h4M2969,2000h4M2969,2005h4" stroke="#222" stroke-width="2"/>
<path d="M3019,1998h13" stroke="#555" stroke-width="2"/>
<path d="M3045,1998H3243" stroke="#666" stroke-width="3"/><rect x="3140" y="1988" width="9" height="22" fill="#666"/>
<path d="M3254,1998h15M3261.500,1990v16" stroke="#555" stroke-width="2"/>
<text x="3296" y="2008" textLength="49" lengthAdjust="spacingAndGlyphs" class="s22">100%</text>
</svg>
</body></html>
